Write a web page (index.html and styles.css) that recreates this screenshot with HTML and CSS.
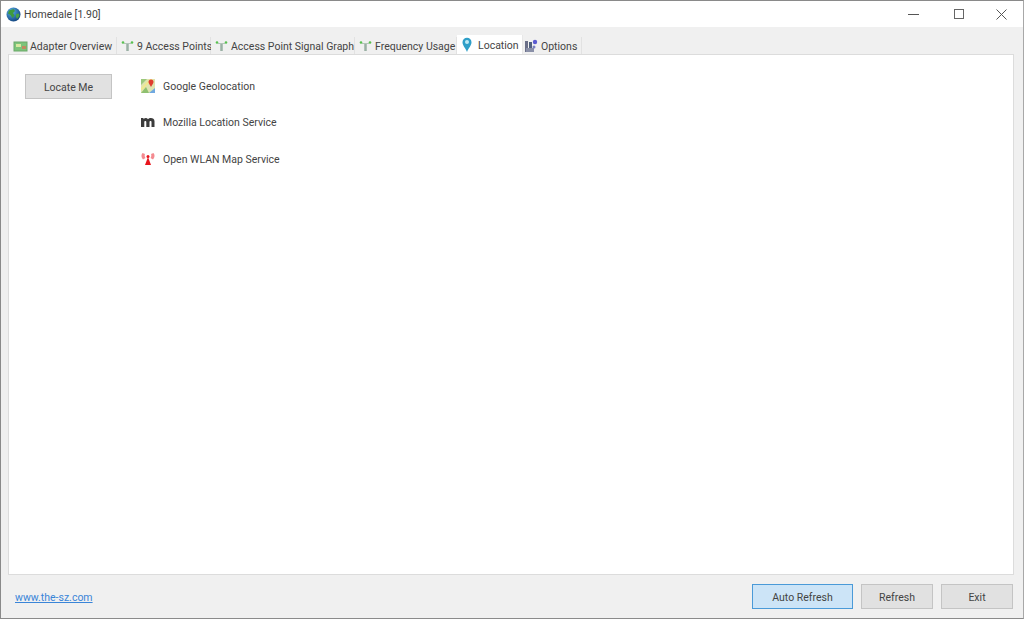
FILE: index.html
```html
<!DOCTYPE html>
<html lang="en">
<head>
<meta charset="utf-8">
<title>Homedale [1.90]</title>
<link rel="stylesheet" href="styles.css">
</head>
<body>
<div class="window">
  <header class="titlebar">
    <svg class="app-icon" width="15" height="15" viewBox="0 0 15 15"><defs><radialGradient id="g" cx=".35" cy=".3" r=".8"><stop offset="0" stop-color="#5ab0e8"/><stop offset="1" stop-color="#0c3c78"/></radialGradient></defs><circle cx="7.5" cy="7.5" r="7" fill="url(#g)"/><path d="M3 3.5 7.5 2 9 4 7 6 8.5 8.5 6.5 11 4.500 8 2 6.5Z" fill="#3f9a3c"/><path d="M10 7l3-.5.5 2.5-2.500 3-1-2Z" fill="#4aa046"/></svg>
    <span class="title">Homedale [1.90]</span>
    <div class="controls">
      <span class="ctl"><svg width="11" height="11" viewBox="0 0 11 11"><path d="M0 5.500h11" stroke="#555" fill="none"/></svg></span>
      <span class="ctl"><svg width="11" height="11" viewBox="0 0 11 11"><rect x=".5" y=".5" width="9" height="9" stroke="#666" fill="none"/></svg></span>
      <span class="ctl"><svg width="11" height="11" viewBox="0 0 11 11"><path d="M.5.500l10 10M10.500.500l-10 10" stroke="#555" fill="none"/></svg></span>
    </div>
  </header>
  <nav class="tabs">
    <span class="tab tab-adapter"><svg class="ico" width="15" height="13" viewBox="0 0 15 13"><rect x="1" y="2" width="13" height="9" fill="#7cc47a" stroke="#6aa868"/><rect x="3" y="4" width="5" height="3" fill="#d8e8a0"/><rect x="9" y="6" width="4" height="3" fill="#c08a60"/></svg>Adapter Overview</span>
    <span class="tab tab-ap"><svg class="ico" width="13" height="13" viewBox="0 0 13 13"><path d="M6.500 3v8" stroke="#9ab0a4" stroke-width="2.500"/><path d="M3 3.500h7" stroke="#b4c4ba"/><circle cx="2" cy="2.500" r="1.300" fill="#58c050"/><circle cx="11" cy="2.500" r="1.300" fill="#58c050"/></svg>9 Access Points</span>
    <span class="tab tab-graph"><svg class="ico" width="13" height="13" viewBox="0 0 13 13"><path d="M6.500 3v8" stroke="#9ab0a4" stroke-width="2.500"/><path d="M3 3.500h7" stroke="#b4c4ba"/><circle cx="2" cy="2.500" r="1.300" fill="#58c050"/><circle cx="11" cy="2.500" r="1.300" fill="#58c050"/></svg>Access Point Signal Graph</span>
    <span class="tab tab-freq"><svg class="ico" width="13" height="13" viewBox="0 0 13 13"><path d="M6.500 3v8" stroke="#9ab0a4" stroke-width="2.500"/><path d="M3 3.500h7" stroke="#b4c4ba"/><circle cx="2" cy="2.500" r="1.300" fill="#58c050"/><circle cx="11" cy="2.500" r="1.300" fill="#58c050"/></svg>Frequency Usage</span>
    <span class="tab active"><svg class="ico" width="12" height="16" viewBox="0 0 12 16"><path d="M6 15C4.500 11 1.500 8.500 1.500 5.200a4.500 4.500 0 0 1 9 0C10.500 8.500 7.500 11 6 15Z" fill="#2f9fc8"/><circle cx="6" cy="5" r="2" fill="#bfeaf5"/></svg>Location</span>
    <span class="tab tab-last"><svg class="ico" width="14" height="14" viewBox="0 0 14 14"><rect x="1" y="2" width="3" height="11" fill="#6a6f88"/><rect x="5" y="3" width="3" height="10" fill="#50607e"/><rect x="2" y="9" width="8" height="4" fill="#8a90a8"/><circle cx="11" cy="3" r="2.200" fill="#5a5ad0"/><circle cx="10" cy="8" r="1.500" fill="#7a80c0"/></svg>Options</span>
  </nav>
  <main class="panel">
    <button class="btn locate" type="button">Locate Me</button>
    <ul class="services">
      <li class="service"><svg width="16" height="16" viewBox="0 0 16 16"><rect x="1" y="1" width="14" height="14" fill="#dfe4b0"/><path d="M1 10 10 1h3L1 13Z" fill="#f0e890"/><path d="M1 15 6 9l3 6Z" fill="#8fc070"/><path d="M9 15l6-5v5Z" fill="#70a8e0"/><path d="M1 1h6L1 7Z" fill="#9cc87c"/><path d="M11 9C10 6.500 8.500 5.500 8.500 4a2.500 2.500 0 0 1 5 0C13.500 5.500 12 6.500 11 9Z" fill="#e03c30"/></svg>Google Geolocation</li>
      <li class="service"><svg width="16" height="16" viewBox="0 0 16 16"><path d="M1 3h2.500v1.200C4.700 2.700 7 2.600 8 4.200 9.300 2.500 14.500 2.300 14.500 6.300V12h-3V7c0-1.500-2-1.300-2 0v5H6.300V7c0-1.500-2-1.300-2 0v5H1Z" fill="#3c3c3c"/></svg>Mozilla Location Service</li>
      <li class="service"><svg width="16" height="16" viewBox="0 0 16 16"><path d="M8 6 5 14h6Z" fill="#e8141c"/><path d="M2.500 2C1 4 1 6 3 8.500L5.500 7C4.500 5.500 4.500 4 5 3ZM13.500 2C15 4 15 6 13 8.500L10.500 7C11.500 5.500 11.500 4 11 3Z" fill="#f48a90"/><circle cx="8" cy="5.500" r="1.500" fill="#e8141c"/></svg>Open WLAN Map Service</li>
    </ul>
  </main>
  <footer class="footer">
    <a class="link" href="#">www.the-sz.com</a>
    <div class="buttons">
      <button class="btn auto" type="button">Auto Refresh</button>
      <button class="btn refresh" type="button">Refresh</button>
      <button class="btn exit" type="button">Exit</button>
    </div>
  </footer>
</div>
</body>
</html>
```
FILE: styles.css
```css
* { box-sizing: border-box; }
html, body { margin: 0; height: 100%; }
body { font-family: Roboto, "Noto Sans", sans-serif; font-size: 10.5px; color: #444; background: #f0f0f0; }
.window { width: 1024px; height: 619px; display: flex; flex-direction: column; background: #f0f0f0; border: 1px solid #8a8a8a; border-right-color: #a8a8a8; overflow: hidden; }
.titlebar { height: 26px; flex: none; background: #fff; display: flex; align-items: center; padding-left: 5px; gap: 3px; }
.title { color: #444; }
.controls { margin-left: auto; display: flex; }
.ctl { width: 46px; height: 26px; display: flex; align-items: center; justify-content: center; }
.ctl:last-child { width: 38px; margin-right: 3px; }
.tabs { display: flex; align-items: flex-end; height: 27px; flex: none; padding-left: 11px; }
.tab { height: 17px; display: flex; align-items: center; padding: 1px 0 0; background: #f0f0f0; border-right: 1px solid #e2e2e2; white-space: nowrap; }
.tab-adapter { width: 105px; padding-left: 1px; }
.tab-ap { width: 94px; padding-left: 4px; }
.tab-graph { width: 144px; padding-left: 4px; }
.tab-freq { width: 102px; padding-left: 4px; }
.active { width: 66px; height: 19px; background: #fff; padding: 1px 0 0 4px; border-color: #e8e8e8; }
.tab-last { width: 59px; padding-left: 1px; }
.ico { margin-right: 3px; flex: none; }
.tab-adapter .ico { margin-right: 2px; }
.active .ico { margin-right: 5px; }
.panel { flex: none; height: 521px; margin: 0 9px 0 7px; background: #fff; border: 1px solid #dcdcdc; display: flex; padding: 19px 16px; align-items: flex-start; }
.btn { font: inherit; color: #444; background: #e1e1e1; border: 1px solid #c4c4c4; height: 25px; padding: 1px 0 0; }
.locate { width: 87px; flex: none; }
.services { list-style: none; margin: 0 0 0 28px; padding: 4px 0 0; }
.service { display: flex; align-items: center; height: 16px; margin-bottom: 20.500px; gap: 7px; }
.footer { flex: 1; display: flex; align-items: center; justify-content: space-between; padding: 0 10px 0 14px; }
.link { color: #3a85d8; padding-top: 2px; }
.buttons { display: flex; gap: 8px; }
.auto { width: 101px; background: #cce4f7; border-color: #4a9ad8; }
.refresh { width: 72px; }
.exit { width: 72px; }
```
